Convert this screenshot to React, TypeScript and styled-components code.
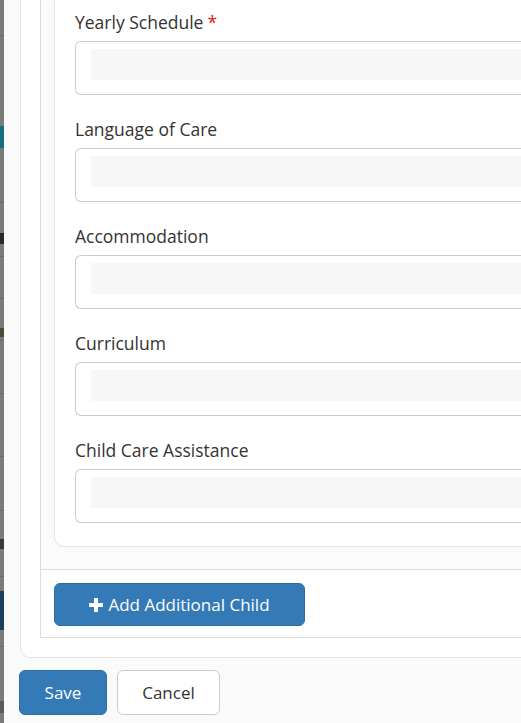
import React from "react";
import styled, { createGlobalStyle } from "styled-components";

const GlobalStyle = createGlobalStyle`
  html, body {
    margin: 0;
    padding: 0;
    overflow: hidden;
    background: #fafafb;
  }
  body {
    font-family: "Open Sans", "Noto Sans", "Liberation Sans", sans-serif;
    color: #333;
  }
`;

const Page = styled.div`
  display: flex;
  height: 723px;
  width: 760px;
  overflow: hidden;
`;

// sliver of the page behind the modal, dimmed by the backdrop
const Backdrop = styled.div`
  width: 4px;
  flex-shrink: 0;
  display: flex;
  flex-direction: column;
  background: #7b7b7b;
`;

const Seg = styled.div<{ $h: number; $c: string }>`
  height: ${(p) => p.$h}px;
  background: ${(p) => p.$c};
  flex-shrink: 0;
`;

const Modal = styled.div`
  flex: 1;
  background: #fafafb;
  padding-left: 15px;
  display: flex;
  flex-direction: column;
`;

const Panel = styled.div`
  margin-top: -45px;
  background: #fff;
  border: 1px solid #e4e4e6;
  border-radius: 0 0 0 10px;
  padding: 19px 0 19px 19px;
  margin-left: 1px;
`;

const ChildBox = styled.div`
  border: 1px solid #dcdcdc;
  border-right: none;
`;

const CardArea = styled.div`
  padding: 13px 0 22px 13px;
  background: #fcfcfc;
`;

const Card = styled.div`
  background: #fff;
  border: 1px solid #e6e6e8;
  border-right: none;
  border-radius: 10px 0 0 10px;
  box-shadow: 0 0 12px rgba(0, 0, 0, 0.04);
  padding: 20px 0 23px 20px;
`;

const Field = styled.div`
  & + & {
    margin-top: 22px;
  }
`;

const Label = styled.label`
  display: block;
  font-size: 17.5px;
  line-height: 24px;
  color: #333;
  margin-bottom: 7px;
`;

const Required = styled.span`
  color: #e02020;
  margin-left: 4px;
`;

const InputShell = styled.div`
  height: 54px;
  box-sizing: border-box;
  border: 1px solid #cccccc;
  border-right: none;
  border-radius: 6px 0 0 6px;
  padding: 7px 0 14px 15px;
  background: #fff;
`;

const InputFill = styled.div`
  height: 31px;
  background: #f7f7f7;
`;

const Footer = styled.div`
  border-top: 1px solid #dcdcdc;
  padding: 13px 13px 11px;
`;

const Button = styled.button<{ $variant?: "primary" | "default" }>`
  display: inline-flex;
  align-items: center;
  justify-content: center;
  gap: 5px;
  box-sizing: border-box;
  font-family: inherit;
  font-size: 17px;
  border-radius: 6px;
  cursor: pointer;
  background: ${(p) => (p.$variant === "default" ? "#fff" : "#337ab7")};
  color: ${(p) => (p.$variant === "default" ? "#333" : "#fff")};
  border: 1px solid ${(p) => (p.$variant === "default" ? "#cccccc" : "#2e6da4")};
`;

const AddButton = styled(Button)`
  width: 251px;
  height: 43px;
`;

const Actions = styled.div`
  display: flex;
  gap: 10px;
  padding: 12px 0 0 0;
`;

const SaveButton = styled(Button)`
  width: 88px;
  height: 45px;
`;

const CancelButton = styled(Button)`
  width: 103px;
  height: 45px;
`;

const Plus = () => (
  <svg width="14" height="14" viewBox="0 0 14 14" aria-hidden>
    <path d="M5 0h4v5h5v4H9v5H5V9H0V5h5z" fill="#fff" />
  </svg>
);

const fields = [
  { label: "Yearly Schedule", required: true },
  { label: "Language of Care" },
  { label: "Accommodation" },
  { label: "Curriculum" },
  { label: "Child Care Assistance" },
];

const G = "#7b7b7b";
const L = "#6b6b6b";
const backdrop: [number, string][] = [
  [35, G], [1, L], [90, G], [22, "#11707c"], [54, G], [1, L], [30, G], [11, "#2a2a2a"],
  [12, G], [1, L], [41, G], [1, L], [29, G], [9, "#4a4a3a"], [3, G], [1, L],
  [52, G], [1, L], [62, G], [1, L], [53, G], [1, L], [28, G], [10, "#3a3a3a"],
  [27, G], [1, L], [14, G], [39, "#1c3f5f"], [16, G], [1, L], [54, G], [12, "#5a5a5a"], [30, G],
];

export default function App() {
  return (
    <>
      <GlobalStyle />
      <Page>
        <Backdrop>
          {backdrop.map(([h, c], i) => (
            <Seg key={i} $h={h} $c={c} />
          ))}
        </Backdrop>
        <Modal>
          <Panel>
            <ChildBox>
              <CardArea>
                <Card>
                  {fields.map((f) => (
                    <Field key={f.label}>
                      <Label>
                        {f.label}
                        {f.required && <Required>*</Required>}
                      </Label>
                      <InputShell>
                        <InputFill />
                      </InputShell>
                    </Field>
                  ))}
                </Card>
              </CardArea>
              <Footer>
                <AddButton>
                  <Plus />
                  Add Additional Child
                </AddButton>
              </Footer>
            </ChildBox>
          </Panel>
          <Actions>
            <SaveButton>Save</SaveButton>
            <CancelButton $variant="default">Cancel</CancelButton>
          </Actions>
        </Modal>
      </Page>
    </>
  );
}
